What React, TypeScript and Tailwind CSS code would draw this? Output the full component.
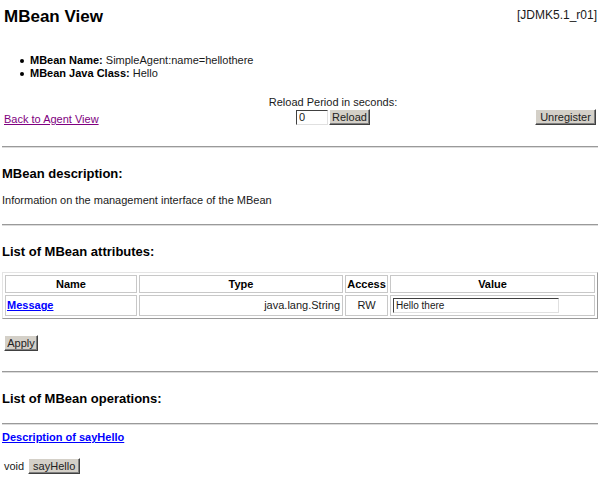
import React from 'react';

const font = { fontFamily: '"Liberation Sans", Arial, sans-serif' };

const Btn: React.FC<{ label: string; className?: string }> = ({ label, className = '' }) => (
  <button
    className={`h-[16px] bg-[#d4d0c8] border border-t-white border-l-white border-r-[#404040] border-b-[#404040] shadow-[inset_-1px_-1px_0_#808080] text-[11px] leading-[12px] text-[#222] flex items-center justify-center ${className}`}
  >
    {label}
  </button>
);

const Rule = ({ className = '' }: { className?: string }) => (
  <div className={`h-[2px] w-[596px] border-t border-t-[#9a9a9a] border-b border-b-[#dcdcdc] ${className}`} />
);

export default function App() {
  return (
    <div className="w-[600px] h-[477px] overflow-hidden bg-white text-[#1a1a1a] pl-[2px]" style={font}>
      {/* header */}
      <div className="flex justify-between items-start pt-[6px] pr-[3px]">
        <h1 className="ml-[2px] text-[17px] leading-[22px] font-bold text-black">MBean View</h1>
        <span className="mt-[2px] text-[12px] leading-[14px]">[JDMK5.1_r01]</span>
      </div>

      {/* info list */}
      <ul className="mt-[26px] text-[11px] leading-[13px]">
        <li className="flex items-center pl-[18px]">
          <span className="w-[4px] h-[4px] rounded-full bg-black" />
          <span className="ml-[6px]">
            <b className="text-black">MBean Name:</b> SimpleAgent:name=hellothere
          </span>
        </li>
        <li className="flex items-center pl-[18px]">
          <span className="w-[4px] h-[4px] rounded-full bg-black" />
          <span className="ml-[6px]">
            <b className="text-black">MBean Java Class:</b> Hello
          </span>
        </li>
      </ul>

      {/* reload / unregister */}
      <div className="mt-[16px] flex items-end w-[596px]">
        <div className="w-[261px] pl-[2px]">
          <a href="#" className="text-[11px] leading-[13px] text-[#800080] underline block translate-y-[1px]">
            Back to Agent View
          </a>
        </div>
        <div className="w-[140px] flex flex-col items-center">
          <span className="text-[11px] leading-[13px]">Reload Period in seconds:</span>
          <div className="flex items-center h-[16px]">
            <input
              defaultValue="0"
              className="w-[32px] h-[15px] bg-white border border-t-[#404040] border-l-[#404040] border-r-[#e0e0e0] border-b-[#e0e0e0] text-[11px] leading-[12px] px-[2px] outline-none"
            />
            <Btn label="Reload" className="w-[41px] ml-[1px]" />
          </div>
        </div>
        <div className="flex-1 flex justify-end pr-[2px]">
          <Btn label="Unregister" className="w-[61px]" />
        </div>
      </div>

      <Rule className="mt-[21px]" />

      <h2 className="mt-[18px] text-[13px] leading-[16px] font-bold text-black">MBean description:</h2>
      <p className="mt-[12px] text-[11px] leading-[13px]">Information on the management interface of the MBean</p>

      <Rule className="mt-[17px]" />

      <h2 className="mt-[18px] text-[13px] leading-[16px] font-bold text-black">List of MBean attributes:</h2>

      <table className="mt-[12px] w-[596px] table-fixed border-separate border-spacing-[2px] border border-t-[#e4e4e4] border-l-[#e4e4e4] border-r-[#9a9a9a] border-b-[#9a9a9a] text-[11px]">
        <thead>
          <tr className="h-[18px]">
            <th className="w-[132px] p-0 border border-[#c8c8c8] font-bold text-black leading-[13px]">Name</th>
            <th className="w-[204px] p-0 border border-[#c8c8c8] font-bold text-black leading-[13px]">Type</th>
            <th className="w-[43px] p-0 border border-[#c8c8c8] font-bold text-black leading-[13px]">Access</th>
            <th className="w-[205px] p-0 border border-[#c8c8c8] font-bold text-black leading-[13px]">Value</th>
          </tr>
        </thead>
        <tbody>
          <tr className="h-[21px]">
            <td className="p-0 pl-[1px] border border-[#c8c8c8]">
              <a href="#" className="font-bold text-[#0000ff] underline">Message</a>
            </td>
            <td className="p-0 pr-[2px] border border-[#c8c8c8] text-right">java.lang.String</td>
            <td className="p-0 border border-[#c8c8c8] text-center">RW</td>
            <td className="p-0 pl-[2px] border border-[#c8c8c8]">
              <input
                defaultValue="Hello there"
                className="block w-[166px] h-[15px] bg-white border border-t-[#404040] border-l-[#404040] border-r-[#e0e0e0] border-b-[#e0e0e0] text-[10px] leading-[12px] px-[2px] outline-none"
              />
            </td>
          </tr>
        </tbody>
      </table>

      <Btn label="Apply" className="mt-[16px] ml-[2px] w-[34px]" />

      <Rule className="mt-[20px]" />

      <h2 className="mt-[18px] text-[13px] leading-[16px] font-bold text-black">List of MBean operations:</h2>

      <Rule className="mt-[16px]" />

      <a href="#" className="block mt-[6px] text-[11px] leading-[13px] font-bold text-[#0000ff] underline">
        Description of sayHello
      </a>

      <div className="mt-[14px] ml-[2px] flex items-center">
        <span className="text-[11px] leading-[13px]">void</span>
        <Btn label="sayHello" className="ml-[4px] w-[52px]" />
      </div>
    </div>
  );
}
